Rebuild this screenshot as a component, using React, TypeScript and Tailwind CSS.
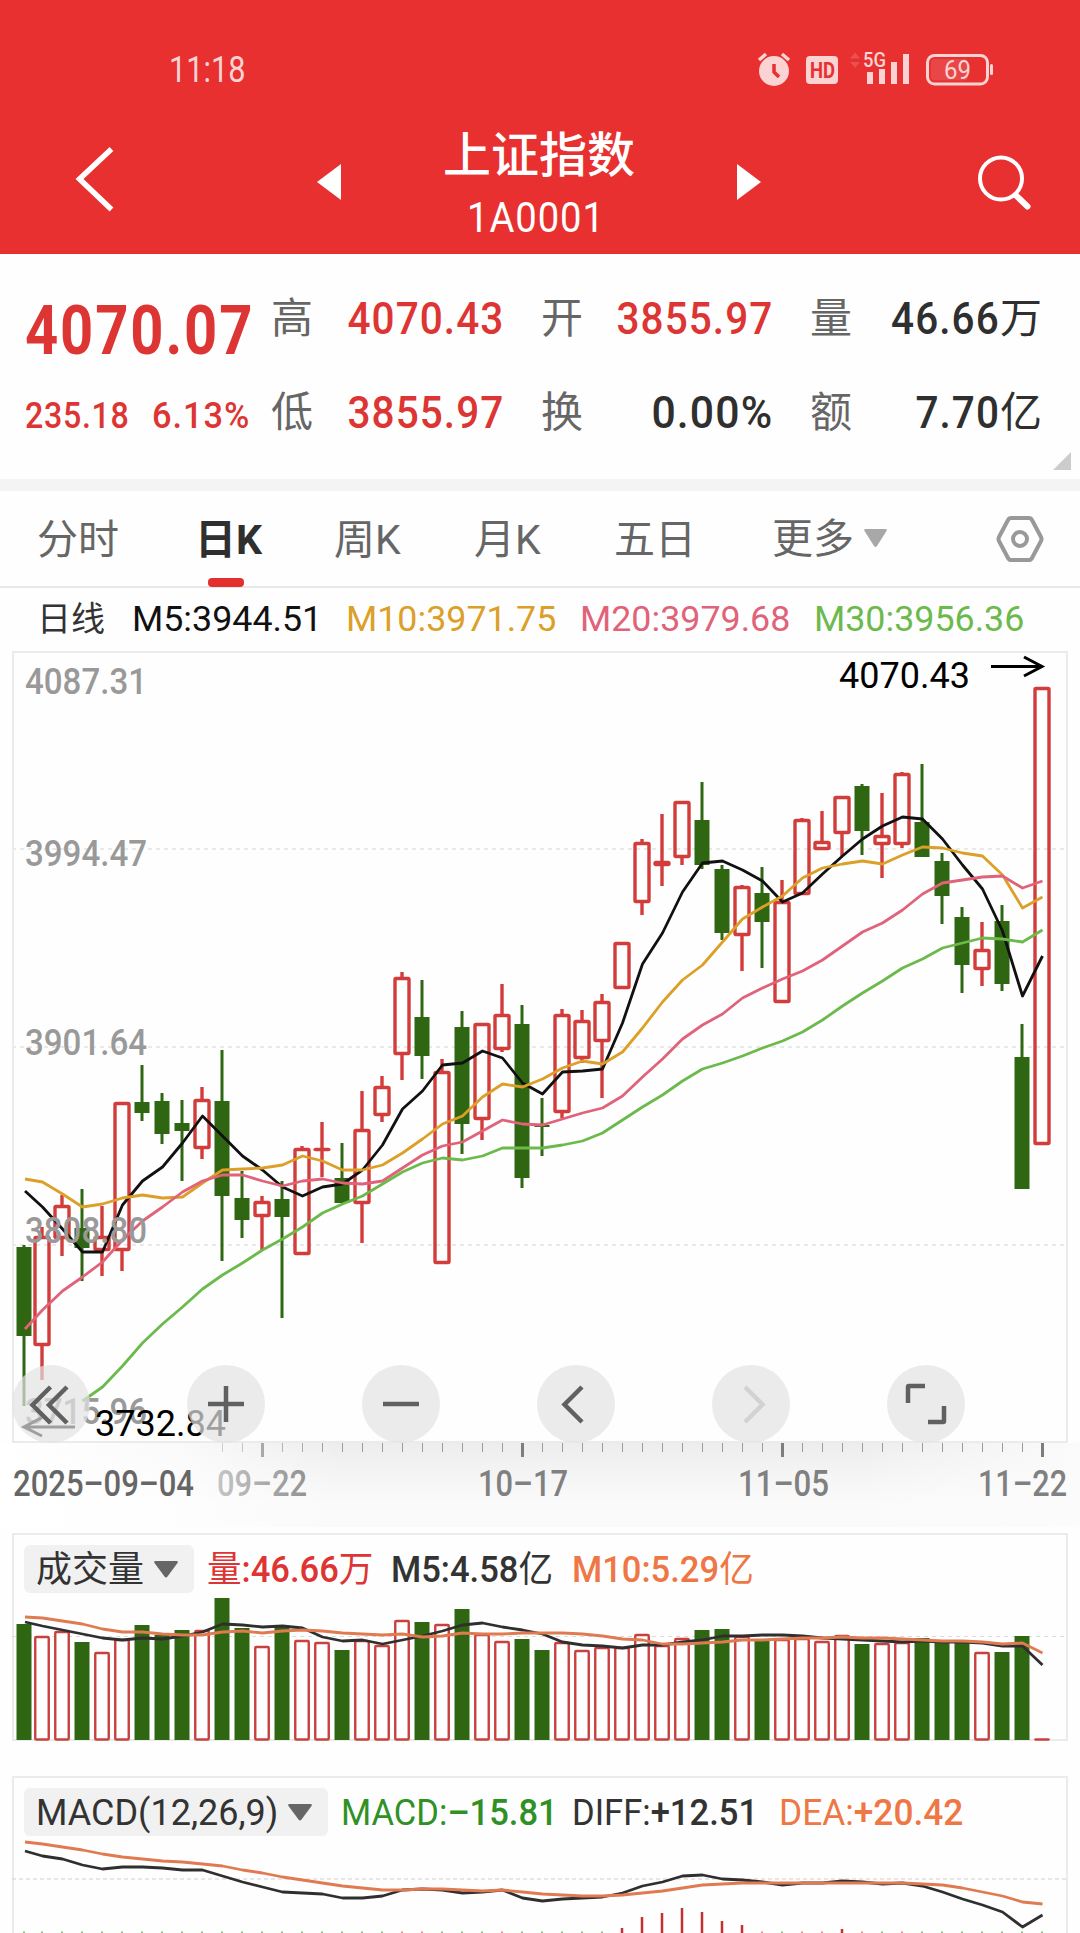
import type { ReactNode } from "react";

// [direction, high, body top, body bottom, low]
type Candle = ["up" | "down", number, number, number, number];

const RED = "#d23c3a";
const GREEN = "#2f6612";

const candles: Candle[] = [
	["down", 1245, 1247, 1336, 1406],
	["up", 1227, 1236, 1346, 1380],
	["up", 1195, 1205, 1239, 1256],
	["down", 1189, 1228, 1248, 1281],
	["up", 1206, 1236, 1251, 1276],
	["up", 1102, 1102, 1251, 1271],
	["down", 1065, 1102, 1113, 1121],
	["down", 1093, 1101, 1134, 1144],
	["down", 1100, 1123, 1131, 1181],
	["up", 1087, 1099, 1149, 1159],
	["down", 1050, 1101, 1196, 1261],
	["down", 1171, 1198, 1220, 1238],
	["up", 1196, 1201, 1217, 1250],
	["down", 1181, 1199, 1217, 1318],
	["up", 1146, 1148, 1255, 1255],
	["up", 1122, 1148, 1151, 1177],
	["down", 1143, 1178, 1203, 1203],
	["up", 1091, 1129, 1204, 1243],
	["up", 1076, 1086, 1116, 1122],
	["up", 972, 977, 1055, 1080],
	["down", 980, 1017, 1056, 1079],
	["up", 1059, 1071, 1264, 1264],
	["down", 1011, 1027, 1124, 1154],
	["up", 1023, 1023, 1120, 1140],
	["up", 984, 1014, 1050, 1052],
	["down", 1005, 1024, 1178, 1188],
	["down", 1098, 1125, 1127, 1156],
	["up", 1009, 1014, 1113, 1118],
	["up", 1010, 1020, 1059, 1063],
	["up", 994, 1001, 1042, 1098],
	["up", 942, 942, 989, 989],
	["up", 839, 842, 903, 915],
	["up", 814, 861, 866, 886],
	["up", 801, 801, 858, 865],
	["down", 782, 820, 865, 869],
	["down", 865, 869, 933, 940],
	["up", 885, 886, 936, 971],
	["down", 867, 893, 922, 968],
	["up", 880, 901, 1003, 1003],
	["up", 818, 819, 895, 895],
	["up", 811, 841, 850, 850],
	["up", 796, 796, 834, 856],
	["down", 784, 786, 831, 855],
	["up", 793, 835, 845, 878],
	["up", 772, 773, 845, 848],
	["down", 764, 822, 857, 857],
	["down", 853, 861, 896, 924],
	["down", 907, 917, 965, 993],
	["up", 922, 949, 970, 986],
	["down", 905, 921, 984, 991],
	["down", 1024, 1057, 1189, 1189],
	["up", 687, 687, 1145, 1145],
];

const ma5 = [
	1191, 1207, 1229, 1252, 1252, 1205, 1181, 1167, 1143, 1116, 1136, 1156, 1170, 1187, 1196, 1187, 1184, 1170, 1145, 1109,
	1091, 1065, 1063, 1051, 1058, 1083, 1094, 1072, 1071, 1069, 1023, 964, 933, 892, 863, 861, 870, 881, 902, 893, 874, 856,
	839, 826, 817, 819, 839, 865, 889, 931, 996, 956,
];
const ma10 = [
	1179, 1182, 1194, 1207, 1204, 1198, 1195, 1198, 1197, 1183, 1170, 1169, 1168, 1165, 1156, 1161, 1170, 1170, 1165, 1153,
	1139, 1124, 1116, 1097, 1084, 1087, 1079, 1068, 1061, 1064, 1052, 1028, 1002, 980, 965, 942, 919, 907, 896, 878, 868,
	864, 861, 864, 855, 847, 848, 853, 856, 875, 908, 897,
];
const ma20 = [
	1329, 1310, 1291, 1277, 1262, 1240, 1221, 1207, 1192, 1181, 1175, 1175, 1181, 1186, 1181, 1179, 1183, 1184, 1181, 1168,
	1155, 1146, 1142, 1131, 1120, 1124, 1125, 1119, 1113, 1108, 1096, 1077, 1059, 1039, 1025, 1014, 998, 988, 979, 971, 960,
	946, 932, 923, 910, 894, 883, 880, 877, 876, 888, 881,
];
// starts three sessions later than the other averages
const ma30 = [
	1401, 1387, 1366, 1343, 1324, 1307, 1289, 1275, 1263, 1250, 1239, 1227, 1213, 1204, 1196, 1184, 1172, 1163, 1158, 1160,
	1156, 1148, 1148, 1148, 1145, 1141, 1133, 1120, 1107, 1095, 1081, 1069, 1063, 1056, 1048, 1041, 1032, 1020, 1006, 993,
	981, 968, 959, 948, 943, 938, 939, 942, 930,
];

const volumes = [
	1624, 1636, 1631, 1642, 1652, 1639, 1625, 1635, 1630, 1630, 1598, 1628, 1646, 1627, 1640, 1642, 1650, 1640, 1645, 1620,
	1622, 1624, 1609, 1634, 1641, 1639, 1650, 1642, 1650, 1647, 1647, 1634, 1645, 1638, 1630, 1629, 1636, 1640, 1639, 1638,
	1641, 1635, 1644, 1643, 1642, 1638, 1641, 1641, 1652, 1652, 1636, 1740,
];
const vol5 = [
	1622, 1626, 1630, 1634, 1638, 1640, 1638, 1639, 1636, 1632, 1624, 1625, 1627, 1626, 1628, 1637, 1641, 1640, 1644, 1640,
	1636, 1631, 1625, 1623, 1627, 1630, 1634, 1642, 1645, 1646, 1648, 1645, 1645, 1642, 1640, 1636, 1636, 1635, 1635, 1636,
	1638, 1639, 1640, 1641, 1642, 1641, 1642, 1642, 1643, 1646, 1646, 1665,
];
const vol10 = [
	1617, 1618, 1621, 1624, 1629, 1632, 1632, 1634, 1635, 1635, 1632, 1631, 1633, 1631, 1630, 1631, 1633, 1634, 1635, 1634,
	1637, 1636, 1633, 1634, 1634, 1633, 1633, 1633, 1634, 1636, 1639, 1640, 1644, 1644, 1643, 1642, 1640, 1640, 1639, 1638,
	1638, 1637, 1638, 1638, 1639, 1640, 1641, 1641, 1642, 1644, 1643, 1653,
];

const diff = [
	1851, 1856, 1859, 1865, 1869, 1867, 1867, 1868, 1870, 1870, 1876, 1882, 1887, 1892, 1893, 1894, 1898, 1898, 1896, 1890,
	1889, 1890, 1893, 1892, 1890, 1898, 1901, 1899, 1898, 1897, 1893, 1886, 1882, 1876, 1875, 1879, 1880, 1882, 1885, 1883,
	1883, 1881, 1882, 1884, 1883, 1886, 1892, 1899, 1905, 1912, 1927, 1915,
];
const dea = [
	1842, 1844, 1847, 1850, 1854, 1857, 1859, 1861, 1862, 1864, 1866, 1870, 1873, 1877, 1880, 1883, 1886, 1888, 1890, 1890,
	1889, 1889, 1890, 1891, 1890, 1892, 1894, 1895, 1896, 1896, 1895, 1893, 1891, 1888, 1885, 1884, 1883, 1883, 1883, 1883,
	1883, 1883, 1883, 1883, 1883, 1884, 1885, 1888, 1892, 1896, 1902, 1904,
];
const macdBars: Record<number, number> = { 30: 1928, 31: 1917, 32: 1913, 33: 1908, 34: 1912, 35: 1921, 36: 1925, 41: 1929 };
const macdUp = [19, 20, 24, 37, 39, 40, 42, 44];

const xAt = (i: number) => (i === 0 ? 24 : 22 + i * 20);

const Line = ({ data, color, start = 0 }: { data: number[]; color: string; start?: number }) => (
	<polyline
		points={data.map((y, i) => `${xAt(i + start) + (i + start === 0 ? 1 : 0.5)},${y}`).join(" ")}
		fill="none"
		stroke={color}
		strokeWidth={2.8}
		strokeLinejoin="round"
	/>
);

const Grid = ({ y }: { y: number }) => (
	<line x1={12} x2={1066} y1={y} y2={y} stroke="#e9e9e9" strokeWidth={2} strokeDasharray="4 4" />
);

type LabelProps = { x: number; y: number; width: number; color?: string; weight?: number; children: string };

const ChartLabel = ({ x, y, width, color = "#999999", weight = 500, children }: LabelProps) => (
	<text x={x} y={y} fontSize={36} fontWeight={weight} fill={color} textLength={width} lengthAdjust="spacingAndGlyphs">
		{children}
	</text>
);

const StatusBar = () => (
	<div className="flex h-[112px] items-end pr-[85px] pb-[20px] pl-[169px] text-[#fbd3d2]">
		<span className="w-[120px] origin-left scale-x-[0.83] text-[37px] leading-[44px]">11:18</span>
		<svg className="mb-[4px] ml-auto h-[40px] w-[240px]" viewBox="755 48 240 40" fill="currentColor">
			<circle cx="774" cy="71" r="15" />
			<path d="M759 60l7-6M789 60l-7-6" stroke="currentColor" strokeWidth="3.5" />
			<path d="M774 64v8l5 5" fill="none" stroke="#e7302f" strokeWidth="3.5" />
			<rect x="806" y="56" width="32" height="28" rx="4" />
			<text x="810" y="78" fontSize="22" fontWeight="700" fill="#e7302f" textLength="25" lengthAdjust="spacingAndGlyphs">
				HD
			</text>
			<path d="M850 58.500l5-6 5 6zM850 62l5 6 5-6z" opacity="0.2" />
			<text x="863" y="67" fontSize="20" fontWeight="500" textLength="23" lengthAdjust="spacingAndGlyphs">
				5G
			</text>
			<path d="M867 72h6v12h-6zM879 69h6v15h-6zM891 62h6v22h-6zM903 54h6v30h-6z" />
			<rect x="927.500" y="55.500" width="60" height="28.500" rx="7" fill="none" stroke="currentColor" strokeWidth="3" />
			<rect x="931" y="59" width="37" height="21.500" rx="4" opacity="0.15" />
			<rect x="990" y="64" width="3" height="11" rx="1.500" />
			<text x="944" y="78.500" fontSize="25" textLength="27" lengthAdjust="spacingAndGlyphs">
				69
			</text>
		</svg>
	</div>
);

const Header = () => (
	<header className="h-[254px] bg-[#e7302f] text-white">
		<StatusBar />
		<div className="flex h-[142px] items-center pl-[74px]">
			<svg className="mb-[8px] h-[70px] w-[44px]" viewBox="74 144 44 70" fill="none" stroke="currentColor" strokeWidth="5.500">
				<path d="M111.500 149L79.500 179l32 30.500" />
			</svg>
			<div className="ml-[199px] flex w-[444px] items-center justify-between">
				<svg className="mb-[2px] h-[36px] w-[24px]" viewBox="0 0 24 36" fill="currentColor">
					<path d="M24 0v36L0 18z" />
				</svg>
				<div className="flex flex-col items-center">
					<h1 className="text-[48px] leading-[58px] font-medium">上证指数</h1>
					<p className="mt-[8px] -mb-[3px] scale-x-[0.91] pr-[6px] text-[42px] leading-[50px] tracking-[1px]">1A0001</p>
				</div>
				<svg className="mb-[2px] h-[36px] w-[24px]" viewBox="0 0 24 36" fill="currentColor">
					<path d="M0 0v36l24-18z" />
				</svg>
			</div>
			<svg className="mb-[3px] ml-[214px] h-[60px] w-[56px] shrink-0" viewBox="976 152 56 60" fill="none" stroke="currentColor">
				<circle cx="1002" cy="178.500" r="21" strokeWidth="4" />
				<path d="M1016.500 195l12 11.500" strokeWidth="6" strokeLinecap="round" />
			</svg>
		</div>
	</header>
);

const Quote = ({ label, value, unit, red }: { label: string; value: string; unit?: string; red?: boolean }) => (
	<div className="flex h-[56px] items-center justify-between">
		<span className="text-[42px] leading-[56px] text-[#666666]">{label}</span>
		<span className={red ? "flex items-center text-[#dc3533]" : "flex items-center text-[#2f2f2f]"}>
			<span
				className={
					value.endsWith("%")
						? "origin-right scale-x-[0.95] text-[45px] leading-[56px] font-medium tracking-[1.2px]"
						: "origin-right scale-x-[0.9] text-[45px] leading-[56px] font-medium tracking-[1.2px]"
				}>
				{value}
			</span>
			{unit && <span className="text-[42px] leading-[56px]">{unit}</span>}
		</span>
	</div>
);

const Summary = () => (
	<section className="relative flex h-[225px] pt-[37px] pl-[25px]">
		<div className="w-[246px] text-[#dc3533]">
			<p className="mt-[4px] w-[246px] origin-left scale-x-[0.84] text-[69px] leading-[72px] font-bold tracking-[2.2px]">
				4070.07
			</p>
			<div className="mt-[27px] flex text-[37px] leading-[44px] font-medium">
				<span className="w-[127px] origin-left scale-x-[0.87] tracking-[0.8px]">235.18</span>
				<span className="origin-left scale-x-[0.93] tracking-[1px]">6.13%</span>
			</div>
		</div>
		<div className="grid h-[150px] w-[772px] grid-cols-[233px_232px_232px] gap-x-[37px] gap-y-[37px]">
			<Quote label="高" value="4070.43" red />
			<Quote label="开" value="3855.97" red />
			<Quote label="量" value="46.66" unit="万" />
			<Quote label="低" value="3855.97" red />
			<Quote label="换" value="0.00%" />
			<Quote label="额" value="7.70" unit="亿" />
		</div>
		<svg className="absolute right-[9px] bottom-[9px] h-[18px] w-[18px]" viewBox="0 0 18 18" fill="#cccccc">
			<path d="M18 0v18H0z" />
		</svg>
	</section>
);

const tabs = [
	{ label: "分时", width: "w-[158px]" },
	{ label: "日K", width: "w-[139px]", active: true },
	{ label: "周K", width: "w-[140px]" },
	{ label: "月K", width: "w-[140px]" },
	{ label: "五日", width: "w-[158px]" },
];

const Tabs = () => (
	<nav className="flex h-[97px] border-b-2 border-[#e8e8e8] pl-[37px] text-[41px] leading-[98px] text-[#666666]">
		{tabs.map(tab => (
			<div key={tab.label} className={`relative h-[96px] ${tab.width}`}>
				<span className={tab.active ? "inline-block font-bold text-[#2f2f2f]" : "inline-block"}>{tab.label}</span>
				{tab.active && <i className="absolute bottom-0 left-[13px] h-[9px] w-[36px] rounded-[4px] bg-[#e3302f]" />}
			</div>
		))}
		<div className="flex w-[223px] items-center">
			更多
			<svg className="mb-[2px] ml-[10px] h-[18px] w-[23px]" viewBox="0 0 23 18" fill="#a8a8a8">
				<path d="M1.500 0h20q2 0 1 2l-9.500 15q-1.500 2-3 0L.500 2q-1-2 1-2z" />
			</svg>
		</div>
		<svg className="mt-[23px] h-[50px] w-[50px]" viewBox="0 0 50 50" fill="none" stroke="#999999" strokeWidth="4">
			<path d="M16 4h18q2 0 3 2l9 17q1 2 0 4l-9 17q-1 2-3 2H16q-2 0-3-2L4 27q-1-2 0-4l9-17q1-2 3-2z" />
			<circle cx="25" cy="25" r="7" />
		</svg>
	</nav>
);

const Averages = () => (
	<div className="flex h-[62px] items-center pl-[37px] text-[35.8px] leading-[66px]">
		<span className="w-[95px] text-[34px] text-[#333333]">日线</span>
		<span className="w-[214px] text-[#111111]">M5:3944.51</span>
		<span className="w-[234px] text-[#dc9f28]">M10:3971.75</span>
		<span className="w-[234px] text-[#e0637a]">M20:3979.68</span>
		<span className="text-[#6cb94c]">M30:3956.36</span>
	</div>
);

const RoundButton = ({ children, muted }: { children: ReactNode; muted?: boolean }) => (
	<button className="flex h-[78px] w-[78px] items-center justify-center rounded-full bg-[#e3e3e3]/70">
		<svg className="h-[78px] w-[78px]" viewBox="0 0 78 78" fill="none" stroke={muted ? "#d2d2d2" : "#606060"} strokeWidth="4.500">
			{children}
		</svg>
	</button>
);

const axisTicks = Array.from({ length: 42 }, (_, i) => 222 + i * 20);

const PriceChart = () => (
	<section className="relative h-[878px]">
		<svg className="block h-[878px] w-[1080px]" viewBox="0 650 1080 878">
			<defs>
				<linearGradient id="axisDown" x1="0" x2="0" y1="0" y2="1">
					<stop offset="0" stopColor="#ededed" />
					<stop offset="0.35" stopColor="#f4f4f4" />
					<stop offset="0.7" stopColor="#fafafa" />
					<stop offset="1" stopColor="#fafafa" />
				</linearGradient>
				<linearGradient id="axisFade" x1="0" x2="1" y1="0" y2="0">
					<stop offset="0" stopColor="#ffffff" />
					<stop offset="0.5" stopColor="#ffffff" stopOpacity="0.75" />
					<stop offset="1" stopColor="#ffffff" stopOpacity="0" />
				</linearGradient>
				<linearGradient id="axisEnd" x1="0" x2="1" y1="0" y2="0">
					<stop offset="0" stopColor="#fcfcfc" stopOpacity="0" />
					<stop offset="1" stopColor="#fcfcfc" stopOpacity="0.9" />
				</linearGradient>
			</defs>
			<rect x="0" y="1443" width="1080" height="84" fill="url(#axisDown)" />
			<rect x="860" y="1443" width="220" height="84" fill="url(#axisEnd)" />
			{axisTicks.map(x => (
				<line
					key={x}
					x1={x + 0.5}
					x2={x + 0.5}
					y1={1443}
					y2={(x - 2) % 260 === 0 ? 1457 : 1452}
					stroke={(x - 2) % 260 === 0 ? "#7d7d7d" : "#9a9a9a"}
					strokeWidth={(x - 2) % 260 === 0 ? 3 : 1}
				/>
			))}
			<ChartLabel x={217} y={1496} width={90} color="#808080">
				09–22
			</ChartLabel>
			<rect x="0" y="1443" width="340" height="84" fill="url(#axisFade)" />
			<ChartLabel x={13} y={1496} width={181} color="#666666">
				2025–09–04
			</ChartLabel>
			<ChartLabel x={478} y={1496} width={90} color="#808080">
				10–17
			</ChartLabel>
			<ChartLabel x={738} y={1496} width={91} color="#808080">
				11–05
			</ChartLabel>
			<ChartLabel x={978} y={1496} width={89} color="#808080">
				11–22
			</ChartLabel>

			<Grid y={849} />
			<Grid y={1047} />
			<Grid y={1245} />
			<rect x="13" y="652" width="1054" height="790" fill="none" stroke="#ebebeb" strokeWidth="2" />

			{candles.map(([side, high, top, bottom, low], i) => {
				const x = xAt(i);
				if (side === "down") {
					return (
						<g key={i} fill={GREEN}>
							<rect x={x - 1.5} y={high} width={3} height={low - high} />
							<rect x={x - 7.5} y={top} width={15} height={bottom - top} />
						</g>
					);
				}
				return (
					<g key={i} stroke={RED} strokeWidth={3.4} fill="none">
						<path d={`M${x} ${high}V${top + 1}M${x} ${bottom - 1}V${low}`} />
						<rect x={x - 7} y={top + 1.5} width={14} height={Math.max(bottom - top - 3, 0.1)} rx={1} />
					</g>
				);
			})}

			<Line data={ma5} color="#111111" />
			<Line data={ma10} color="#dc9f28" />
			<Line data={ma20} color="#e0637a" />
			<Line data={ma30} color="#6cb94c" start={3} />

			<ChartLabel x={25} y={694} width={122}>
				4087.31
			</ChartLabel>
			<ChartLabel x={25} y={866} width={122}>
				3994.47
			</ChartLabel>
			<ChartLabel x={25} y={1055} width={122}>
				3901.64
			</ChartLabel>
			<ChartLabel x={25} y={1243} width={122}>
				3808.80
			</ChartLabel>
			<ChartLabel x={25} y={1424} width={122}>
				3715.96
			</ChartLabel>

			<text x="839" y="687.500" fontSize="36">
				4070.43
			</text>
			<path d="M991 666.500h49M1024 657l18 9.500-18 9.500" fill="none" stroke="#000000" strokeWidth="3" />
			<text x="95" y="1436" fontSize="36">
				3732.84
			</text>
			<path d="M75 1427H26M42 1417.500L24 1427l18 9" fill="none" stroke="#000000" strokeWidth="3" />
		</svg>

		<div className="absolute top-[715px] left-[12px] flex gap-[97px]">
			<RoundButton>
				<path d="M38.500 22L20.500 40l18 18M55 22L37 40l18 18" />
			</RoundButton>
			<RoundButton>
				<path d="M21 39h36M39 21v36" />
			</RoundButton>
			<RoundButton>
				<path d="M21 39h36" />
			</RoundButton>
			<RoundButton>
				<path d="M45 22L27.500 39.500 45 57" />
			</RoundButton>
			<RoundButton muted>
				<path d="M33 22l17.500 17.500L33 57" />
			</RoundButton>
			<RoundButton>
				<path d="M21 38V22q0-1 1-1h16M57 41v15q0 1-1 1H41" />
			</RoundButton>
		</div>
	</section>
);

const Chip = ({ children }: { children: ReactNode }) => (
	<button className="flex h-[48px] items-center rounded-[6px] bg-[#f1f1f1] px-[12px] text-[36px] leading-[48px] text-[#333333]">
		<span className="relative top-px">{children}</span>
		<svg className="mr-[4px] ml-[10px] h-[17px] w-[24px]" viewBox="0 0 24 17" fill="#666666">
			<path d="M1.500 0h21q2 0 1 2L13.500 15.500q-1.500 2-3 0L.500 2q-1-2 1-2z" />
		</svg>
	</button>
);

const VolumePanel = () => (
	<section className="mt-[5px] h-[209px]">
		<div className="mx-[12px] flex h-[63px] items-start border-2 border-b-0 border-[#ebebeb] px-[10px] pt-[10px] text-[36px] leading-[51px] font-medium">
			<div className="w-[183px] font-normal">
				<Chip>成交量</Chip>
			</div>
			<span className="w-[184px] text-[#dc3533]">
				<span className="inline-block origin-left scale-x-[0.96]">
					<span className="font-normal">量</span>:46.66<span className="font-normal">万</span>
				</span>
			</span>
			<span className="w-[181px] text-[#333333]">
				<span className="inline-block origin-left scale-x-[0.96]">
					M5:4.58<span className="font-normal">亿</span>
				</span>
			</span>
			<span className="origin-left scale-x-[0.96] text-[#ee7745]">
				M10:5.29<span className="font-normal">亿</span>
			</span>
		</div>
		<svg className="block h-[146px] w-[1080px]" viewBox="0 1596 1080 146">
			<path d="M13 1596v144h1054v-144" fill="none" stroke="#ebebeb" strokeWidth="2" />
			<line x1="12" x2="1066" y1="1636.500" y2="1636.500" stroke="#dddddd" strokeDasharray="4 4" />
			{volumes.map((top, i) => {
				const x = xAt(i);
				return candles[i][0] === "down" ? (
					<rect key={i} x={x - 7.5} y={top} width={15} height={1740 - top} fill={GREEN} />
				) : (
					<rect
						key={i}
						x={x - 6.75}
						y={Math.min(top + 1, 1739.5)}
						width={13.5}
						height={Math.max(1738.5 - top, 0.1)}
						rx={1}
						fill="#ffffff"
						stroke="#c8413f"
						strokeWidth={2.4}
					/>
				);
			})}
			<Line data={vol5} color="#2f2f2f" />
			<Line data={vol10} color="#e07a50" />
		</svg>
	</section>
);

const MacdPanel = () => (
	<section className="mt-[34px]">
		<div className="mx-[12px] flex h-[62px] items-start border-2 border-b-0 border-[#ebebeb] px-[10px] pt-[10px] text-[36px] leading-[50px]">
			<div className="w-[317px]">
				<Chip>MACD(12,26,9)</Chip>
			</div>
			<span className="w-[231px] text-[#2f9125]">
				<span className="inline-block origin-left scale-x-[0.96]">
					MACD:<span className="font-medium">–15.81</span>
				</span>
			</span>
			<span className="w-[207px] text-[#333333]">
				<span className="inline-block origin-left scale-x-[0.96]">
					DIFF:<span className="font-medium">+12.51</span>
				</span>
			</span>
			<span className="origin-left scale-x-[0.98] text-[#ee7745]">
				DEA:<span className="font-medium">+20.42</span>
			</span>
		</div>
		<svg className="block h-[95px] w-[1080px]" viewBox="0 1838 1080 95">
			<path d="M13 1838v95M1067 1838v95" stroke="#ebebeb" strokeWidth="2" />
			<line x1="12" x2="1066" y1="1879" y2="1879" stroke="#cfcfcf" strokeDasharray="4 3" />
			{candles.map((_, i) => {
				const top = macdBars[i];
				return (
					<rect
						key={i}
						x={xAt(i) - (top ? 1.25 : 1)}
						y={top ?? 1931.5}
						width={top ? 2.5 : 2}
						height={top ? 1933 - top : 1.5}
						fill={top ? "#bf3331" : macdUp.includes(i) ? "#dc8b8a" : "#8fb383"}
					/>
				);
			})}
			<Line data={diff} color="#2f2f2f" />
			<Line data={dea} color="#e07a50" />
		</svg>
	</section>
);

export default function App() {
	return (
		<main className="h-[1933px] w-[1080px] overflow-hidden bg-[#fefefe] font-['Roboto','Noto_Sans_CJK_SC',sans-serif] whitespace-nowrap">
			<Header />
			<Summary />
			<div className="h-[12px] bg-[#f4f4f4]" />
			<Tabs />
			<Averages />
			<PriceChart />
			<VolumePanel />
			<MacdPanel />
		</main>
	);
}
